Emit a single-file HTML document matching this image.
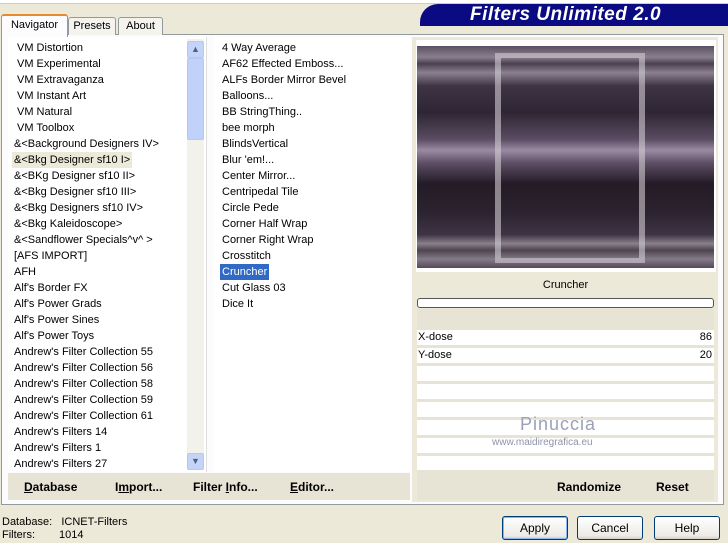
<html><head><style>
body{margin:0;width:728px;height:543px;background:#ECE9D8;font-family:"Liberation Sans",sans-serif;font-size:11px;color:#000;position:relative;overflow:hidden}
.a{position:absolute}
.tab{position:absolute;top:17px;height:17px;border:1px solid #919B9C;border-bottom:none;background:#F4F3EE;text-align:center;line-height:16px;font-size:11px;border-radius:3px 3px 0 0}
.li{position:absolute;left:0;height:16px;line-height:16px;white-space:nowrap}
.b{position:absolute;font-weight:bold;font-size:12px;top:480px}
.btn{position:absolute;top:516px;width:64px;height:22px;border:1px solid #003C74;border-radius:3px;background:linear-gradient(#fff,#ECEBE6 85%,#D6D0C5);text-align:center;line-height:22px;font-size:12px}
.row{position:absolute;left:417px;width:297px;height:15px;background:#fff;line-height:15px}
</style></head><body>
<div class="a" style="left:0;top:0;width:728px;height:3px;background:#fff;border-bottom:1px solid #D0CCBC"></div>
<div class="a" style="left:420px;top:4px;width:308px;height:22px;background:#0A0A82;border-radius:18px 0 0 0"></div>
<div class="a" style="left:470px;top:4px;font:italic bold 19px 'Liberation Sans',sans-serif;color:#fff;letter-spacing:0.5px">Filters Unlimited 2.0</div>
<div class="a" style="left:1px;top:34px;width:721px;height:469px;border:1px solid #919B9C;background:#FCFCFE"></div>
<div class="tab" style="left:68px;width:46px">Presets</div>
<div class="tab" style="left:118px;width:43px">About</div>
<div class="tab" style="left:1px;top:14px;width:65px;height:21px;background:#FCFCFE;border-top:2px solid #E68B2C;line-height:18px">Navigator</div>
<!-- left list -->
<div class="a" style="left:8px;top:37px;width:198px;height:435px;background:#fff;border-right:1px solid #ddd">
<div class="a" style="left:0;top:0;width:200px">
<div class="li" style="top:3px;left:9px">VM Distortion</div>
<div class="li" style="top:19px;left:9px">VM Experimental</div>
<div class="li" style="top:35px;left:9px">VM Extravaganza</div>
<div class="li" style="top:51px;left:9px">VM Instant Art</div>
<div class="li" style="top:67px;left:9px">VM Natural</div>
<div class="li" style="top:83px;left:9px">VM Toolbox</div>
<div class="li" style="top:99px;left:6px">&amp;&lt;Background Designers IV&gt;</div>
<div class="li" style="top:115px;left:4px;padding:0 2px;background:#ECE9D8">&amp;&lt;Bkg Designer sf10 I&gt;</div>
<div class="li" style="top:131px;left:6px">&amp;&lt;BKg Designer sf10 II&gt;</div>
<div class="li" style="top:147px;left:6px">&amp;&lt;Bkg Designer sf10 III&gt;</div>
<div class="li" style="top:163px;left:6px">&amp;&lt;Bkg Designers sf10 IV&gt;</div>
<div class="li" style="top:179px;left:6px">&amp;&lt;Bkg Kaleidoscope&gt;</div>
<div class="li" style="top:195px;left:6px">&amp;&lt;Sandflower Specials^v^ &gt;</div>
<div class="li" style="top:211px;left:6px">[AFS IMPORT]</div>
<div class="li" style="top:227px;left:6px">AFH</div>
<div class="li" style="top:243px;left:6px">Alf's Border FX</div>
<div class="li" style="top:259px;left:6px">Alf's Power Grads</div>
<div class="li" style="top:275px;left:6px">Alf's Power Sines</div>
<div class="li" style="top:291px;left:6px">Alf's Power Toys</div>
<div class="li" style="top:307px;left:6px">Andrew's Filter Collection 55</div>
<div class="li" style="top:323px;left:6px">Andrew's Filter Collection 56</div>
<div class="li" style="top:339px;left:6px">Andrew's Filter Collection 58</div>
<div class="li" style="top:355px;left:6px">Andrew's Filter Collection 59</div>
<div class="li" style="top:371px;left:6px">Andrew's Filter Collection 61</div>
<div class="li" style="top:387px;left:6px">Andrew's Filters 14</div>
<div class="li" style="top:403px;left:6px">Andrew's Filters 1</div>
<div class="li" style="top:419px;left:6px">Andrew's Filters 27</div>
</div>
<div class="a" style="left:179px;top:2px;width:17px;height:431px;background:#F3F1EC">
<div class="a" style="left:0;top:2px;width:15px;height:15px;border:1px solid #B4C8F6;border-radius:2px;background:#C4D3F8;text-align:center;line-height:15px;font-size:9px;color:#4D6185">&#9650;</div>
<div class="a" style="left:0;top:19px;width:15px;height:80px;border:1px solid #B4C8F6;border-radius:2px;background:#C1D2FA"></div>
<div class="a" style="left:0;top:414px;width:15px;height:15px;border:1px solid #B4C8F6;border-radius:2px;background:#C4D3F8;text-align:center;line-height:15px;font-size:9px;color:#4D6185">&#9660;</div>
</div>
</div>
<!-- middle -->
<div class="a" style="left:214px;top:37px;width:196px;height:435px;background:#fff">
<div class="li" style="top:3px;left:8px">4 Way Average</div>
<div class="li" style="top:19px;left:8px">AF62 Effected Emboss...</div>
<div class="li" style="top:35px;left:8px">ALFs Border Mirror Bevel</div>
<div class="li" style="top:51px;left:8px">Balloons...</div>
<div class="li" style="top:67px;left:8px">BB StringThing..</div>
<div class="li" style="top:83px;left:8px">bee morph</div>
<div class="li" style="top:99px;left:8px">BlindsVertical</div>
<div class="li" style="top:115px;left:8px">Blur 'em!...</div>
<div class="li" style="top:131px;left:8px">Center Mirror...</div>
<div class="li" style="top:147px;left:8px">Centripedal Tile</div>
<div class="li" style="top:163px;left:8px">Circle Pede</div>
<div class="li" style="top:179px;left:8px">Corner Half Wrap</div>
<div class="li" style="top:195px;left:8px">Corner Right Wrap</div>
<div class="li" style="top:211px;left:8px">Crosstitch</div>
<div class="li" style="top:227px;left:6px;padding:0 2px;background:#316AC5;color:#fff">Cruncher</div>
<div class="li" style="top:243px;left:8px">Cut Glass 03</div>
<div class="li" style="top:259px;left:8px">Dice It</div>
</div>
<!-- right -->
<div class="a" style="left:412px;top:37px;width:306px;height:465px;background:#ECE9D8"></div>
<div class="a" style="left:416px;top:40px;width:300px;height:232px;background:#fff"></div>
<div class="a" style="left:417px;top:46px;width:297px;height:222px;background:linear-gradient(#5a5060 0%,#8a7f8f 5%,#4a4050 8%,#8c8090 12%,#3e3444 18%,#2e2634 30%,#5a4c62 42%,#9a8aa2 47%,#5c4c62 53%,#231b26 62%,#2c2330 75%,#3e3444 85%,#8a808c 89%,#4e4450 92%,#847a88 96%,#554a58 100%)"></div>
<div class="a" style="left:495px;top:53px;width:138px;height:200px;border:6px solid rgba(210,205,212,.6);border-top-width:5px;border-bottom-width:5px"></div>
<div class="a" style="left:417px;top:272px;width:297px;height:26px;background:#ECE9D8;text-align:center;line-height:26px">Cruncher</div>
<div class="a" style="left:417px;top:298px;width:295px;height:8px;border:1px solid #555;border-radius:3px;background:#fff"></div>
<div class="a" style="left:417px;top:309px;width:297px;height:161px;background:#E8E4D5"></div>
<div class="row" style="top:330px"><span style="margin-left:1px">X-dose</span><span style="position:absolute;right:2px">86</span></div>
<div class="row" style="top:348px"><span style="margin-left:1px">Y-dose</span><span style="position:absolute;right:2px">20</span></div>
<div class="row" style="top:366px"></div>
<div class="row" style="top:384px"></div>
<div class="row" style="top:402px"></div>
<div class="row" style="top:420px"></div>
<div class="row" style="top:438px"></div>
<div class="row" style="top:456px;height:14px"></div>
<div class="a" style="left:520px;top:414px;font-size:18px;color:#9ca0b8;letter-spacing:1px">Pinuccia</div>
<div class="a" style="left:492px;top:437px;font-size:10px;color:#8f93a8">www.maidiregrafica.eu</div>
<div class="a" style="left:417px;top:470px;width:297px;height:30px;background:#E8E4D5"></div>
<div class="b" style="left:557px">Randomize</div>
<div class="b" style="left:656px">Reset</div>
<div class="a" style="left:8px;top:473px;width:402px;height:27px;background:#E8E4D5"></div>
<div class="b" style="left:24px"><u>D</u>atabase</div>
<div class="b" style="left:115px">I<u>m</u>port...</div>
<div class="b" style="left:193px">Filter <u>I</u>nfo...</div>
<div class="b" style="left:290px"><u>E</u>ditor...</div>
<div class="a" style="left:2px;top:516px;line-height:13px">Database:&nbsp;&nbsp;&nbsp;ICNET-Filters<br>Filters:<span style="position:absolute;left:57px">1014</span></div>
<div class="btn" style="left:502px;border-color:#003C74;box-shadow:inset 0 0 0 1px #8CB4F2">Apply</div>
<div class="btn" style="left:577px">Cancel</div>
<div class="btn" style="left:654px">Help</div>
</body></html>
